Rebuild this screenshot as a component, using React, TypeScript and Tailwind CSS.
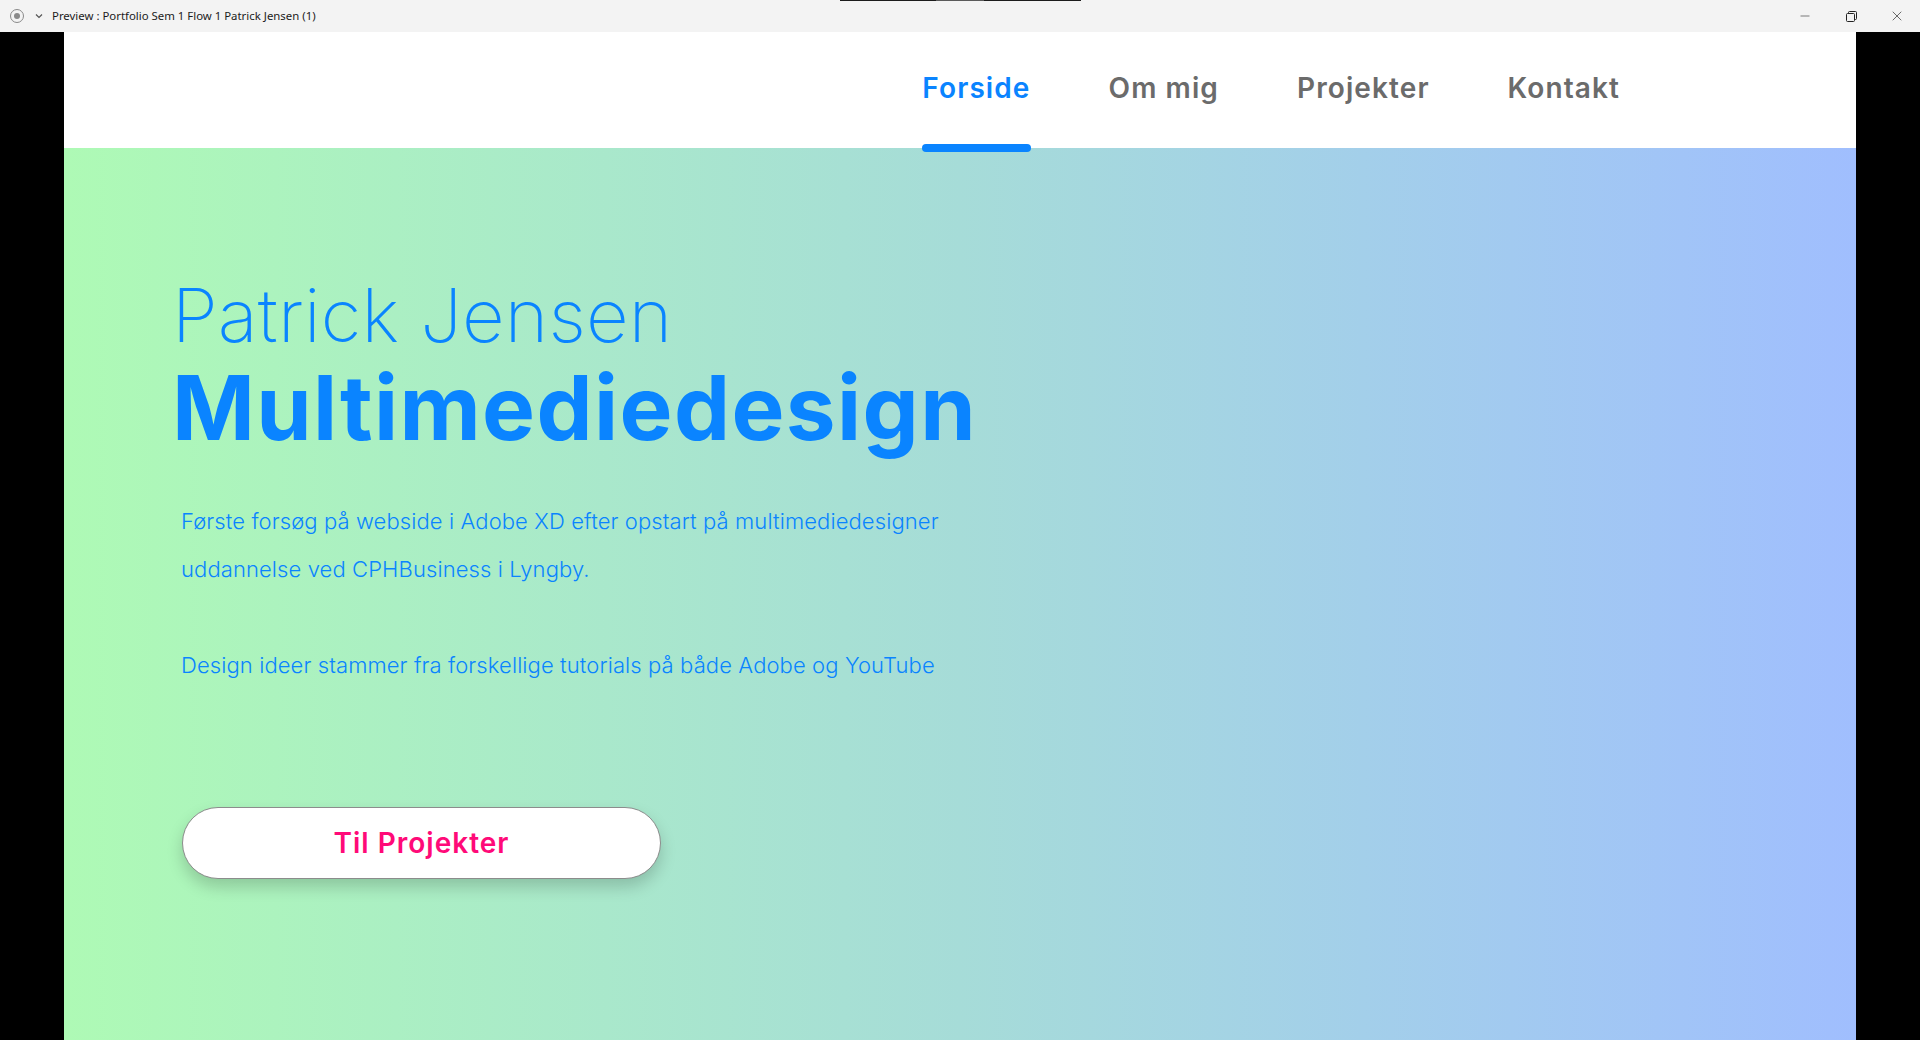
import { Minus, X } from "lucide-react";

const navItems = ["Forside", "Om mig", "Projekter", "Kontakt"];

function TitleBar() {
  return (
    <div className="relative flex h-8 items-center bg-[#f3f3f3] text-[11.4px] text-[#1b1b1b] [font-family:'Noto_Sans','Open_Sans',sans-serif]">
      <div className="absolute left-[840px] top-0 flex h-[1px] w-[241px]">
        <div className="w-[96px] bg-[#1c1c1c]" />
        <div className="w-[48px] bg-[#5a5a5a]" />
        <div className="flex-1 bg-[#1c1c1c]" />
      </div>
      <div className="ml-[10px] flex h-[14px] w-[14px] items-center justify-center rounded-full border border-[#8a8a8a]">
        <div className="h-[6px] w-[6px] rounded-full bg-[#8a8a8a]" />
      </div>
      <svg className="ml-[10px]" width="10" height="10" viewBox="0 0 10 10">
        <path d="M2 3.5 L5 6.5 L8 3.5" fill="none" stroke="#555" strokeWidth="1.2" />
      </svg>
      <span className="ml-[8px]">Preview : Portfolio Sem 1 Flow 1 Patrick Jensen (1)</span>
      <div className="ml-auto flex h-full items-center">
        <div className="flex h-full w-[46px] items-center justify-center">
          <Minus size={14} strokeWidth={1} className="text-[#222]" />
        </div>
        <div className="flex h-full w-[46px] items-center justify-center">
          <svg width="11" height="11" viewBox="0 0 11 11">
            <rect x="0.5" y="2.5" width="8" height="8" rx="1" fill="none" stroke="#222" />
            <path d="M2.5 2.5 V1.5 a1 1 0 0 1 1 -1 H9.5 a1 1 0 0 1 1 1 V7.5 a1 1 0 0 1 -1 1 H8.5" fill="none" stroke="#222" />
          </svg>
        </div>
        <div className="flex h-full w-[46px] items-center justify-center">
          <X size={16} strokeWidth={1} className="text-[#222]" />
        </div>
      </div>
    </div>
  );
}

function Nav() {
  return (
    <nav className="relative z-10 flex h-[116px] items-start justify-end gap-[78px] bg-white pr-[236px] pt-[35px] [font-family:Inter,sans-serif]">
      {navItems.map((item, i) => (
        <div key={item} className="relative h-full">
          <span
            className={`text-[28px] font-semibold tracking-[1.1px] ${
              i === 0 ? "text-[#0a84ff]" : "text-[#6b6b6b]"
            }`}
          >
            {item}
          </span>
          {i === 0 && (
            <div className="absolute bottom-[-4px] left-0 right-0 h-[8px] rounded-[4px] bg-[#0a84ff]" />
          )}
        </div>
      ))}
    </nav>
  );
}

function Hero() {
  return (
    <section className="flex flex-1 flex-col bg-gradient-to-r from-[#aefab5] via-[#a6dcd8] to-[#a0befe] pl-[108px] pt-[122px] text-[#0a84ff] [font-family:Inter,sans-serif]">
      <h1 className="text-[74px] font-extralight leading-[90px] tracking-[0.2px]">Patrick Jensen</h1>
      <h2 className="mt-[-4px] text-[89px] font-bold leading-[104px] tracking-[1.4px]">Multimediedesign</h2>
      <div className="ml-[9px] mt-[37px] text-[22px] font-light leading-[48px] tracking-[0.1px]">
        <p>Første forsøg på webside i Adobe XD efter opstart på multimediedesigner</p>
        <p>uddannelse ved CPHBusiness i Lyngby.</p>
        <p className="mt-[48px]">Design ideer stammer fra forskellige tutorials på både Adobe og YouTube</p>
      </div>
      <button className="ml-[10px] mt-[118px] flex h-[72px] w-[479px] items-center justify-center rounded-full border border-[#8c8c8c] bg-white text-[28px] font-semibold tracking-[1px] text-[#ff0a78] shadow-[0_8px_16px_rgba(0,0,0,0.18)]">
        Til Projekter
      </button>
    </section>
  );
}

export default function App() {
  return (
    <div className="flex h-[1040px] w-[1920px] flex-col overflow-hidden bg-black">
      <TitleBar />
      <div className="flex flex-1">
        <div className="w-[64px] bg-black" />
        <main className="flex flex-1 flex-col">
          <Nav />
          <Hero />
        </main>
        <div className="w-[64px] bg-black" />
      </div>
    </div>
  );
}
